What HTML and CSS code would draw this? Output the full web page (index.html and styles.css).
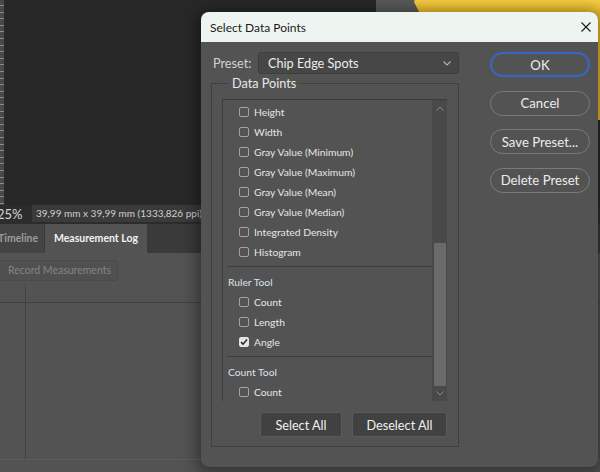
FILE: index.html
```html
<!DOCTYPE html>
<html lang="en">
<head>
    <meta charset="UTF-8">
    <meta name="viewport" content="width=device-width, initial-scale=1.0">
    <title>Select Data Points</title>
    <link rel="stylesheet" href="styles.css">
</head>
<body>
    <div class="app">
        <div class="workspace">
            <div class="ruler"></div>
            <div class="canvas">
                <div class="doc">
                    <div class="doc-yellow"></div>
                </div>
            </div>
        </div>

        <div class="statusbar">
            <span class="zoom">25%</span>
            <span class="docinfo">39,99 mm x 39,99 mm (1333,826 ppi)</span>
        </div>

        <div class="tabs">
            <div class="tab">Timeline</div>
            <div class="tab active">Measurement Log</div>
        </div>

        <div class="panel">
            <div class="panel-toolbar">
                <button class="record" disabled>Record Measurements</button>
            </div>
            <div class="log-table">
                <div class="log-head">
                    <div class="log-index"></div>
                    <div class="log-cell"></div>
                </div>
                <div class="log-body">
                    <div class="log-index"></div>
                    <div class="log-cell"></div>
                </div>
            </div>
        </div>
    </div>

    <!-- Dialog window -->
    <div class="dialog">
        <div class="titlebar">
            <span>Select Data Points</span>
            <svg class="close" width="10" height="10" viewBox="0 0 10 10">
                <path d="M0.5 0.5 L9.5 9.5 M9.5 0.5 L0.5 9.5" stroke="#1a1a1a" stroke-width="1.1" fill="none"/>
            </svg>
        </div>

        <div class="dialog-body">
            <div class="dialog-main">
                <div class="preset-row">
                    <label>Preset:</label>
                    <div class="select">
                        <span>Chip Edge Spots</span>
                        <svg width="8" height="5" viewBox="0 0 8 5">
                            <path d="M0.5 0.5 L4 4 L7.5 0.5" stroke="#b4b4b4" stroke-width="1.1" fill="none"/>
                        </svg>
                    </div>
                </div>

                <fieldset class="points">
                    <legend>Data Points</legend>
                    <div class="listbox">
                        <div class="items">
                            <div class="item"><span class="check"></span>Height</div>
                            <div class="item"><span class="check"></span>Width</div>
                            <div class="item"><span class="check"></span>Gray Value (Minimum)</div>
                            <div class="item"><span class="check"></span>Gray Value (Maximum)</div>
                            <div class="item"><span class="check"></span>Gray Value (Mean)</div>
                            <div class="item"><span class="check"></span>Gray Value (Median)</div>
                            <div class="item"><span class="check"></span>Integrated Density</div>
                            <div class="item"><span class="check"></span>Histogram</div>
                            <div class="sep"></div>
                            <div class="group">Ruler Tool</div>
                            <div class="item"><span class="check"></span>Count</div>
                            <div class="item"><span class="check"></span>Length</div>
                            <div class="item"><span class="check checked">
                                <svg width="8" height="8" viewBox="0 0 8 8"><path d="M1 4.2 L3.1 6.2 L7 1.6" stroke="#2a2a2a" stroke-width="1.6" fill="none"/></svg>
                            </span>Angle</div>
                            <div class="sep"></div>
                            <div class="group">Count Tool</div>
                            <div class="item"><span class="check"></span>Count</div>
                        </div>
                        <div class="scrollbar">
                            <div class="arrow up">
                                <svg width="8" height="5" viewBox="0 0 8 5"><path d="M0.5 4.5 L4 1 L7.5 4.5" stroke="#8c8c8c" stroke-width="1" fill="none"/></svg>
                            </div>
                            <div class="track"><div class="thumb"></div></div>
                            <div class="arrow down">
                                <svg width="8" height="5" viewBox="0 0 8 5"><path d="M0.5 0.5 L4 4 L7.5 0.5" stroke="#8c8c8c" stroke-width="1" fill="none"/></svg>
                            </div>
                        </div>
                    </div>
                    <div class="list-buttons">
                        <button class="flat select-all">Select All</button>
                        <button class="flat deselect-all">Deselect All</button>
                    </div>
                </fieldset>
            </div>

            <div class="dialog-side">
                <button class="pill primary">OK</button>
                <button class="pill">Cancel</button>
                <button class="pill">Save Preset...</button>
                <button class="pill">Delete Preset</button>
            </div>
        </div>
    </div>
</body>
</html>
```

FILE: styles.css
```css
body {
    margin: 0;
    width: 600px;
    height: 472px;
    overflow: hidden;
    background-color: #535353;
    font-family: "Lato", "Noto Sans", sans-serif;
    position: relative;
}

/* Background app */
.app {
    display: flex;
    flex-direction: column;
    height: 472px;
}

.workspace {
    display: flex;
    height: 205px;
}

.ruler {
    width: 4px;
    background-color: #4a4a4a;
    background-image: repeating-linear-gradient(to bottom, transparent 0 5px, #8a8a8a 5px 6px, transparent 6px 6.6px);
}

.canvas {
    flex: 1;
    background-color: #282828;
    position: relative;
    overflow: hidden;
}

.doc {
    position: absolute;
    left: 372px;
    top: 0;
    right: 0;
    height: 120px;
    background-color: #5a5a5a;
}

.doc-yellow {
    position: absolute;
    left: 37px;
    top: 0;
    width: 260px;
    height: 120px;
    background: linear-gradient(to bottom, #f7cf45, #efbd28 14px);
    border-top-left-radius: 3px;
    transform-origin: 0 0;
    transform: skewX(27deg);
}

.statusbar {
    height: 17px;
    display: flex;
    align-items: center;
    background-color: #2c2c2c;
    font-size: 13px;
    color: #d8d8d8;
}

.zoom {
    width: 35px;
    margin-left: -3px;
}

.docinfo {
    height: 17px;
    line-height: 17px;
    padding: 0 4px;
    background-color: #3a3a3a;
    font-size: 10px;
    color: #d0d0d0;
    white-space: nowrap;
}

.tabs {
    height: 31px;
    display: flex;
    align-items: flex-end;
    background-color: #3a3a3a;
    border-top: 2px solid #2c2c2c;
    box-sizing: border-box;
}

.tab {
    height: 29px;
    line-height: 28px;
    background-color: #444;
    color: #9c9c9c;
    font-size: 10.5px;
    font-weight: bold;
    white-space: nowrap;
    box-sizing: border-box;
}

.tab:first-child {
    width: 44px;
    text-indent: -2px;
    margin-right: 1px;
}

.tab.active {
    width: 102px;
    padding-left: 9px;
    background-color: #535353;
    color: #f2f2f2;
}

.panel {
    flex: 1;
    display: flex;
    flex-direction: column;
    background-color: #535353;
}

.panel-toolbar {
    padding: 5px 0 4px 0;
}

.record {
    margin-left: -2px;
    width: 120px;
    height: 21px;
    font-family: inherit;
    font-size: 10.5px;
    color: #858585;
    background-color: #505050;
    border: 1px solid #4a4a4a;
    border-radius: 3px;
    padding: 0 0 0 9px;
    text-align: left;
    white-space: nowrap;
}

.log-table {
    flex: 1;
    display: flex;
    flex-direction: column;
}

.log-head, .log-body {
    display: flex;
}

.log-head {
    height: 17px;
    border-bottom: 1px solid #404040;
}

.log-body {
    flex: 1;
    border-bottom: 1px solid #5c5c5c;
    margin-bottom: 12px;
}

.log-index {
    width: 25px;
    border-right: 1px solid #424242;
}

/* Dialog */
.dialog {
    position: absolute;
    left: 201px;
    top: 12px;
    width: 397px;
    height: 455px;
    background-color: #535353;
    border-radius: 8px;
    overflow: hidden;
    box-shadow: 0 2px 16px 4px rgba(0, 0, 0, 0.4);
}

.titlebar {
    height: 30px;
    display: flex;
    align-items: center;
    justify-content: space-between;
    padding: 0 7px 0 9px;
    background-color: #eef5f1;
    color: #1a1a1a;
    font-size: 12px;
}

.dialog-body {
    display: flex;
    padding: 10px 0 0 10px;
}

.dialog-main {
    width: 248px;
}

.preset-row {
    display: flex;
    align-items: center;
    height: 22px;
    font-size: 12.7px;
}

.preset-row label {
    width: 45px;
    padding-left: 2px;
    color: #d2d2d2;
}

.select {
    flex: 1;
    height: 22px;
    display: flex;
    align-items: center;
    justify-content: space-between;
    padding: 0 7px 0 9px;
    background-color: #474747;
    border: 1px solid #3e3e3e;
    border-radius: 3px;
    box-sizing: border-box;
    color: #ececec;
}

.points {
    margin: 1px 0 0 0;
    padding: 8px 11px 9px 10px;
    border: 1px solid #404040;
    min-width: 0;
}

.points legend {
    margin-left: 6px;
    padding: 0 4px;
    font-size: 12.7px;
    line-height: 16px;
    color: #e8e8e8;
}

.listbox {
    height: 302px;
    display: flex;
    border-top: 1px solid #3c3c3c;
    border-left: 1px solid #3c3c3c;
    box-sizing: border-box;
}

.items {
    flex: 1;
    overflow: hidden;
    padding-top: 2px;
    font-size: 10.3px;
    color: #e6e6e6;
}

.item {
    height: 20px;
    display: flex;
    align-items: center;
    padding-left: 16px;
    white-space: nowrap;
}

.check {
    width: 10px;
    height: 10px;
    margin-right: 5px;
    border: 1px solid #a2a2a2;
    border-radius: 2px;
    box-sizing: border-box;
    display: flex;
    align-items: center;
    justify-content: center;
}

.check.checked {
    background-color: #e4e4e4;
    border-color: #e4e4e4;
}

.group {
    height: 20px;
    line-height: 20px;
    padding-left: 5px;
    color: #dce2ea;
}

.sep {
    height: 1px;
    margin: 4px 0 5px 4px;
    background-color: #3e3e3e;
}

.scrollbar {
    width: 15px;
    display: flex;
    flex-direction: column;
    background-color: #494949;
}

.arrow {
    display: flex;
    justify-content: center;
}

.arrow.up {
    height: 17px;
    align-items: center;
}

.arrow.down {
    height: 15px;
    align-items: center;
}

.track {
    flex: 1;
    display: flex;
    flex-direction: column;
    justify-content: flex-end;
    padding: 0 1px 0 2px;
}

.thumb {
    height: 143px;
    background-color: #6a6a6a;
}

.list-buttons {
    display: flex;
    justify-content: flex-end;
    gap: 10px;
    margin-top: 11px;
}

.flat {
    height: 25px;
    font-family: inherit;
    font-size: 12.7px;
    color: #f0f0f0;
    background-color: #414141;
    border: 1px solid #5a5a5a;
    border-radius: 3px;
}

.select-all { width: 82px; }
.deselect-all { width: 95px; }

.dialog-side {
    margin-left: 31px;
    width: 100px;
    display: flex;
    flex-direction: column;
    gap: 13.5px;
}

.pill {
    height: 25px;
    font-family: inherit;
    font-size: 13.2px;
    color: #ececec;
    background-color: transparent;
    border: 1px solid #7a7a7a;
    border-radius: 13px;
}

.pill.primary {
    border: 2px solid #3467c9;
}
```
